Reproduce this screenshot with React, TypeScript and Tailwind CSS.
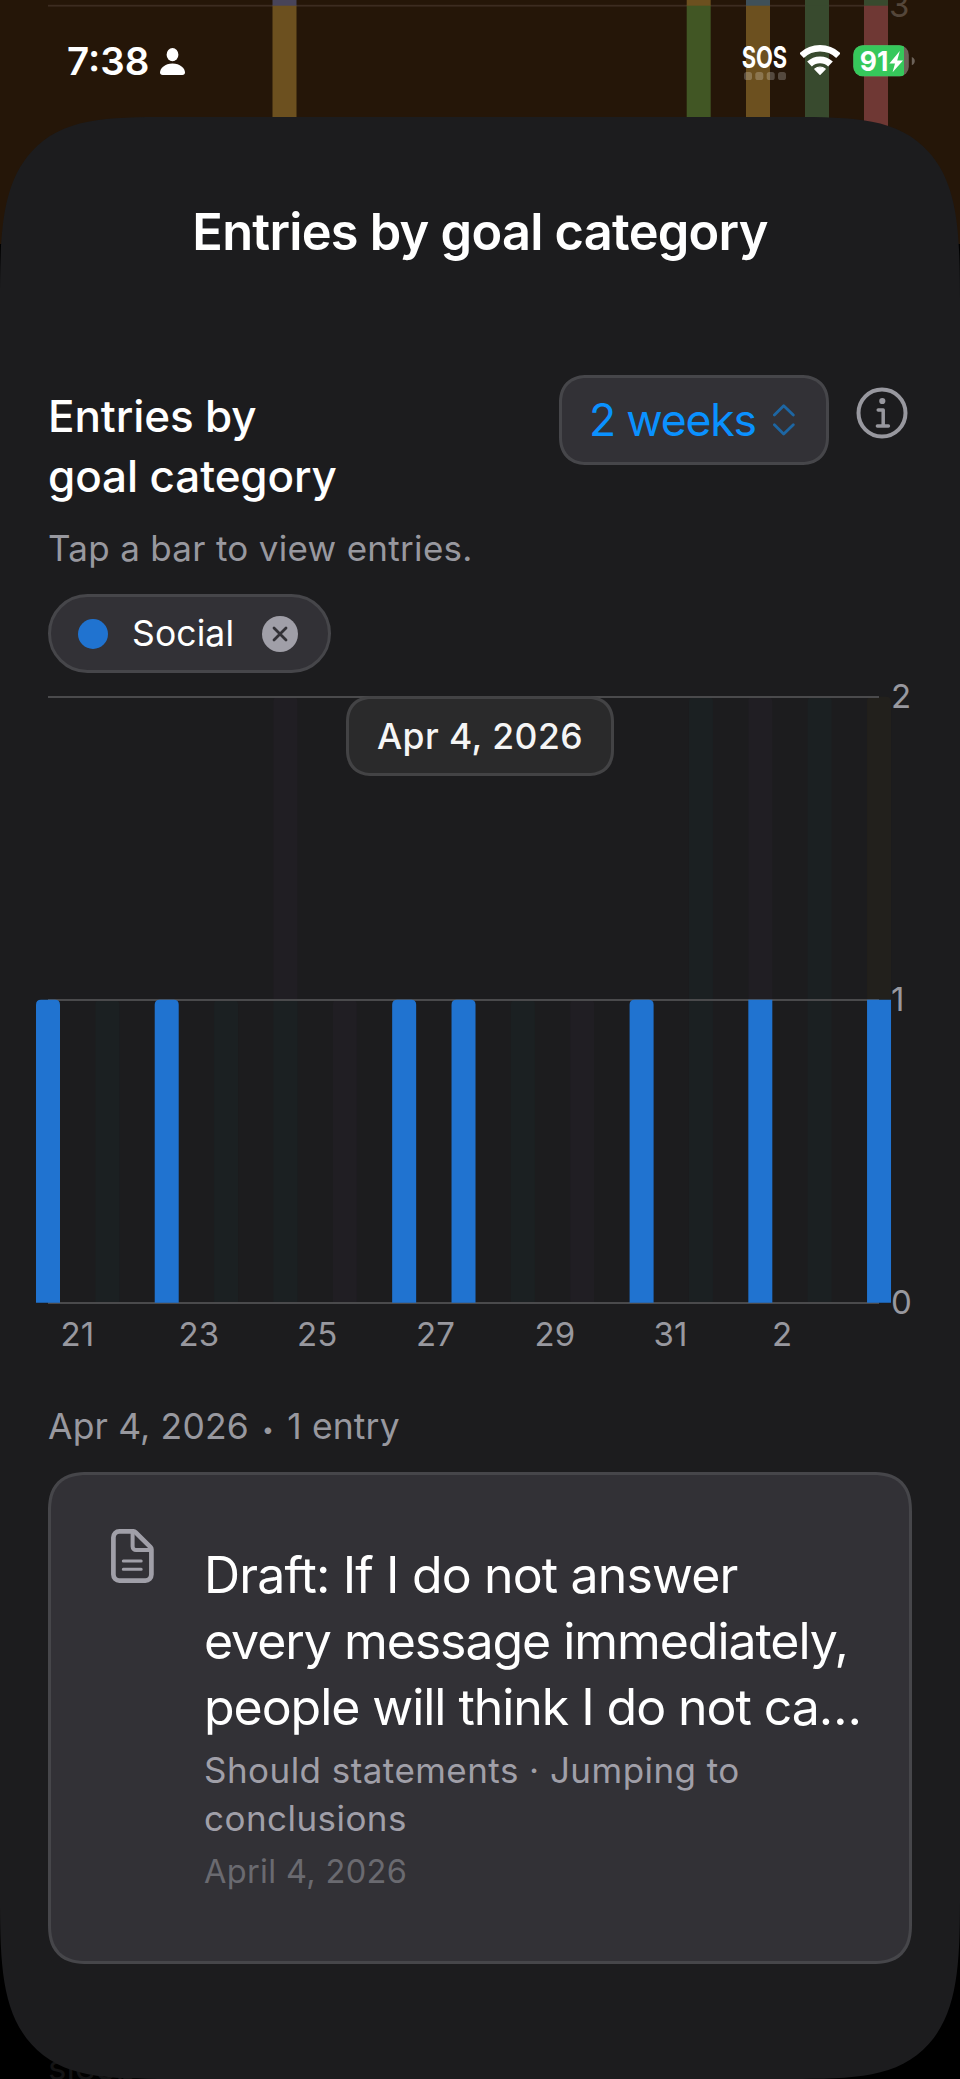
type Tone = "teal" | "violet" | "olive" | "blue";

const tones: Record<Tone, string> = {
  teal: "#1b2022",
  violet: "#201e23",
  olive: "#22201c",
  blue: "#2073d0",
};

// one entry per day, stacked bottom to top
const days: Tone[][] = [
  ["blue"],
  ["teal"],
  ["blue"],
  ["teal"],
  ["teal", "violet"],
  ["violet"],
  ["blue"],
  ["blue"],
  ["teal"],
  ["violet"],
  ["blue"],
  ["teal", "teal"],
  ["blue", "violet"],
  ["teal", "teal"],
  ["blue", "olive"],
];

const dayLabels = [
  { label: "21", x: 24.5 },
  { label: "23", x: 142.5 },
  { label: "25", x: 261 },
  { label: "27", x: 380 },
  { label: "29", x: 498.5 },
  { label: "31", x: 617.5 },
  { label: "2", x: 736 },
];

const STEP = 59.36;
const BAR = 24;
const ROW = 303;
const BASE = 629.7;

const segments = days.flatMap((stack, day) =>
  stack.map((tone, level) => ({ tone, day, level, rounded: level === stack.length - 1 }))
);

const backdropBars = [
  { x: 272.5, top: "#484459", fill: "#6c501f" },
  { x: 686.7, top: "#6c501f", fill: "#415624" },
  { x: 746, top: "#3f5059", fill: "#6c501f" },
  { x: 805, top: "#384a2e", fill: "#384a2e" },
  { x: 864, top: "#384a2e", fill: "#6f3834" },
];

function Backdrop() {
  return (
    <div className="absolute inset-0 -z-10 bg-black" aria-hidden="true">
      <svg className="block bg-[#251608]" width="960" height="244" viewBox="0 0 960 244">
        <rect x="48" y="4.8" width="837" height="1.8" fill="#3c2c20" />
        {backdropBars.map((bar) => (
          <g key={bar.x}>
            <rect x={bar.x} y="0" width={BAR} height="6" fill={bar.top} />
            <rect x={bar.x} y="5.7" width={BAR} height="140" fill={bar.fill} />
          </g>
        ))}
        <text x="889" y="17" fontSize="33" fill="#54463a">3</text>
      </svg>
      <p className="absolute bottom-[-12px] left-12 text-[35px] leading-12 text-[#141415]">sleep</p>
    </div>
  );
}

function StatusBar() {
  return (
    <div className="flex h-[117px] items-start justify-between pr-11 pl-[67px] text-white">
      <div className="flex">
        <span className="mt-[37px] w-[93px] text-[38.5px] leading-12 font-semibold">7:38</span>
        <svg className="mt-12" width="25" height="27" viewBox="0 0 25 27" fill="currentColor" aria-hidden="true">
          <ellipse cx="12.5" cy="6.7" rx="5.9" ry="6.6" />
          <path d="M2.6 27C1 27 0 26.1 0 24.6 0 20.4 5 15.6 12.5 15.6S25 20.4 25 24.6c0 1.5-1 2.4-2.6 2.4Z" />
        </svg>
      </div>

      <div className="flex pt-[45px]">
        <svg className="mr-[13px] overflow-visible" width="45" height="36" viewBox="0 0 45 36" fill="currentColor" aria-hidden="true">
          <text x="-0.3" y="22.8" fontSize="30.5" fontWeight="700" textLength="45.5" lengthAdjust="spacingAndGlyphs">
            SOS
          </text>
          {[2, 13.3, 24.7, 36].map((x) => (
            <rect key={x} x={x} y="27" width="8" height="8" rx="2.6" fillOpacity="0.22" />
          ))}
        </svg>
        <svg className="mr-[13px]" width="40" height="31" viewBox="0 0 40 31" fill="none" stroke="currentColor" aria-hidden="true">
          <path d="M1.6 10.6a26.75 26.75 0 0 1 36.8 0" strokeWidth="6.4" />
          <path d="M9.5 19a15.2 15.2 0 0 1 21 0" strokeWidth="6.8" />
          <path d="M20 29.2 14.9 24a8 8 0 0 1 10.2 0Z" fill="currentColor" strokeWidth="1.4" strokeLinejoin="round" />
        </svg>
        <svg width="63" height="32" viewBox="0 0 63 32" aria-hidden="true">
          <defs>
            <clipPath id="battery">
              <rect x="0.3" y="0.2" width="55.5" height="31" rx="9.5" />
            </clipPath>
          </defs>
          <g clipPath="url(#battery)">
            <rect width="56" height="32" fill="#fff" fillOpacity="0.33" />
            <rect width="51" height="32" fill="#36c85b" />
          </g>
          <path d="M58.8 12c4 1.4 4 6.8 0 8.2Z" fill="#fff" fillOpacity="0.33" />
          <text x="6.8" y="25.7" fontSize="27.5" fontWeight="700" textLength="28.5" lengthAdjust="spacingAndGlyphs" fill="#fff">
            91
          </text>
          <path d="m46.8 6-10.4 12.600h5.600l-2.400 8.600 10.400-11.800h-5.800Z" fill="#fff" />
        </svg>
      </div>
    </div>
  );
}

function Bars({ items }: { items: typeof segments }) {
  return (
    <>
      {items.map(({ tone, day, level, rounded }) => {
        const x = day * STEP;
        const y = BASE - ROW * (level + 1);
        const r = rounded ? 5 : 0;
        return (
          <path
            key={`${day}-${level}`}
            d={`M${x} ${y + ROW}V${y + r}q0 ${-r} ${r} ${-r}h${BAR - 2 * r}q${r} 0 ${r} ${r}V${y + ROW}Z`}
            fill={tones[tone]}
          />
        );
      })}
    </>
  );
}

function Chart() {
  return (
    <div className="relative -ml-3 h-[690px] w-[876px]">
      <svg className="block overflow-visible" width="876" height="690" viewBox="0 0 876 690">
        <Bars items={segments.filter((s) => s.tone !== "blue")} />
        {[23, 326, 629].map((y) => (
          <rect key={y} x="12" y={y} width="831" height="2" fill="#4a4a4c" />
        ))}
        <Bars items={segments.filter((s) => s.tone === "blue")} />
        <g fontSize="33" fill="#98989f">
          <text x="855" y="34.7">2</text>
          <text x="855" y="337.7">1</text>
          <text x="855" y="641">0</text>
          {dayLabels.map((d) => (
            <text key={d.label} x={d.x} y="673">{d.label}</text>
          ))}
        </g>
      </svg>
      {/* Selected day */}
      <div className="absolute top-[23px] left-[310px] flex h-20 w-[268px] items-center justify-center rounded-[26px] border-3 border-[#434345] bg-[#2a2a2b] pt-[2px] text-[35.5px] font-medium tracking-[0.45px] text-[#f5f5f5] [corner-shape:superellipse(1.2)]">
        Apr 4, 2026
      </div>
    </div>
  );
}

function EntryCard() {
  return (
    <div className="mt-[21px] flex h-[492px] rounded-[40px] border-3 border-[#46464a] bg-[#323136] pl-[60px] [corner-shape:superellipse(1.35)]">
      <svg className="mt-[54px] shrink-0" width="43" height="54" viewBox="0 0 43 54" fill="none" stroke="#a09fa8" strokeLinecap="round" strokeLinejoin="round" aria-hidden="true">
        <path d="M8.4 2.4H22.5a3 3 0 0 1 2.1.9L39.5 18.2a3 3 0 0 1 .9 2.1V45.6a6 6 0 0 1-6 6H8.4a6 6 0 0 1-6-6V8.4a6 6 0 0 1 6-6Z" strokeWidth="4.7" />
        <path d="M21.6 3.5V17.6a3.5 3.5 0 0 0 3.5 3.5H39.5" strokeWidth="4" />
        <path d="M12.3 32H30.2M12.3 40.3H30.2" strokeWidth="3" />
      </svg>
      <div className="ml-[50px] w-[664px] pt-[67px]">
        <p className="text-[50px] leading-[66px] tracking-[-1.05px] text-white">
          <span className="tracking-[-0.85px]">Draft: If I do not answer</span>
          <br />
          every message immediately,
          <br />
          people will think I do not ca…
        </p>
        <p className="mt-[6px] w-[560px] text-[35px] leading-12 tracking-[0.45px] text-[#a09fa8]">
          Should statements · Jumping to conclusions
        </p>
        <p className="mt-2 text-[32.5px] leading-11 tracking-[0.35px] text-[#6a6a70]">April 4, 2026</p>
      </div>
    </div>
  );
}

export default function App() {
  return (
    <div className="relative isolate h-[2079px] w-[960px] overflow-hidden font-[Inter,sans-serif]">
      <Backdrop />
      <StatusBar />

      <main className="h-[1962px] rounded-[170px/190px] bg-[#1c1c1e] px-12 pt-[83px] [corner-shape:superellipse(1.77)]">
        <h1 className="text-center text-[50.5px] leading-16 font-semibold tracking-[-0.74px] text-white">
          Entries by goal category
        </h1>

        <div className="mt-[111px] flex items-start">
          <h2 className="mt-[11px] flex-1 text-[44px] leading-[60px] font-medium tracking-[-0.1px] text-white">
            Entries by
            <br />
            goal category
          </h2>
          <button className="flex h-[90px] w-[270px] items-center rounded-[28px] border-3 border-[#46464a] bg-[#323136] pl-[27px] text-[44.5px] tracking-[-1.2px] text-[#0a91ff] [corner-shape:superellipse(1.2)]">
            <span className="w-[184px] text-left">2 weeks</span>
            <svg width="22" height="32" viewBox="0 0 22 32" fill="none" stroke="#1d66a3" strokeWidth="2.8" strokeLinecap="round" strokeLinejoin="round" aria-hidden="true">
              <path d="m1.4 11 9.300-9.300L20.300 11M1.400 20.800l9.300 9.300 9.600-9.300" />
            </svg>
          </button>
          <svg className="mt-3 mr-1 ml-[27px]" width="52" height="52" viewBox="-26 -26 52 52" fill="none" stroke="#98989f" strokeLinecap="round" strokeLinejoin="round" aria-label="Info">
            <circle r="23.5" strokeWidth="4" />
            <circle cx="0.3" cy="-12" r="3.1" fill="#98989f" stroke="none" />
            <path d="M-3.800-2.900H1.200V12.600M-4.600 12.900H6.400" strokeWidth="3.5" />
          </svg>
        </div>

        <p className="mt-[18px] text-[35px] leading-12 tracking-[0.3px] text-[#98989f]">Tap a bar to view entries.</p>

        <div className="mt-[22px] flex h-[79px] w-[283px] items-center rounded-full border-3 border-[#46464a] bg-[#323136] pl-[27px]">
          <span className="size-[30px] rounded-full bg-[#2073d0]" />
          <span className="ml-6 w-[130px] text-[35.5px] tracking-[0.1px] text-white">Social</span>
          <svg width="36" height="36" viewBox="-18 -18 36 36" aria-label="Remove">
            <circle r="18" fill="#a09fa8" />
            <path d="M-6-6 6 6M6-6-6 6" stroke="#323136" strokeWidth="2.8" strokeLinecap="round" />
          </svg>
        </div>

        <Chart />

        <p className="mt-10 text-[35.5px] leading-12 tracking-[0.15px] text-[#98989f]">
          Apr 4, 2026 <span className="inline-block w-[18px] -translate-y-[2px] text-center text-[21px] leading-none">•</span> 1 entry
        </p>
        <EntryCard />
      </main>
    </div>
  );
}
